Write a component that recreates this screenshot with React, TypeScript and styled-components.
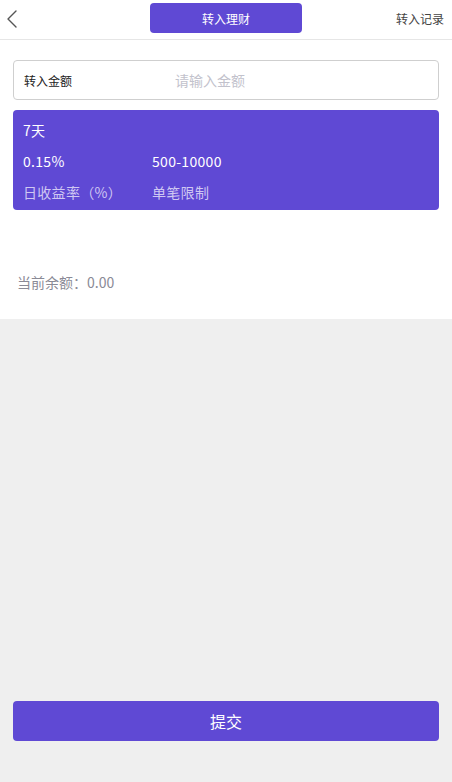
import React from "react";
import styled, { createGlobalStyle } from "styled-components";

const purple = "#5f49d4";

const GlobalStyle = createGlobalStyle`
  html, body {
    margin: 0;
    padding: 0;
    height: 100%;
  }
  body {
    font-family: "Noto Sans CJK SC", "Noto Sans", sans-serif;
    background: #efefef;
  }
  #root {
    min-height: 100%;
  }
  * {
    box-sizing: border-box;
  }
`;

const Page = styled.div`
  display: flex;
  flex-direction: column;
  min-height: 100vh;
`;

const Header = styled.div`
  display: flex;
  align-items: center;
  justify-content: space-between;
  height: 40px;
  padding: 0 8px 0 6px;
  background: #fff;
  border-bottom: 1px solid #e6e6e6;
  position: relative;
`;

const BackButton = styled.button`
  border: none;
  background: none;
  padding: 0;
  width: 20px;
  height: 24px;
  display: flex;
  align-items: center;
  cursor: pointer;
  margin-top: -2px;
`;

const Tab = styled.div`
  position: absolute;
  left: 150px;
  top: 3px;
  width: 152px;
  height: 30px;
  display: flex;
  align-items: center;
  justify-content: center;
  background: ${purple};
  border-radius: 4px;
  color: #fff;
  font-size: 12px;
`;

const Record = styled.span`
  font-size: 12px;
  color: #444;
  margin-top: -2px;
`;

const Body = styled.div`
  background: #fff;
  padding: 20px 13px 0;
  height: 279px;
`;

const InputBox = styled.label`
  display: flex;
  align-items: center;
  height: 40px;
  border: 1px solid #cfcfcf;
  border-radius: 4px;
  padding: 0 10px;
`;

const InputLabel = styled.span`
  width: 151px;
  font-size: 12px;
  color: #222;
`;

const Input = styled.input`
  flex: 1;
  border: none;
  outline: none;
  font-family: inherit;
  font-size: 14px;
  color: #333;
  padding: 0;
  background: transparent;
  &::placeholder {
    color: #c2c2cc;
  }
`;

const Card = styled.div`
  margin-top: 10px;
  height: 100px;
  padding: 4px 10px 0;
  background: ${purple};
  border-radius: 4px;
`;

const CardRow = styled.div<{ $muted?: boolean }>`
  display: flex;
  height: 31px;
  align-items: center;
  font-size: 14px;
  letter-spacing: 0.3px;
  color: ${(p) => (p.$muted ? "#cfc7f2" : "#fff")};
`;

const Cell = styled.span`
  width: 129px;
`;

const Balance = styled.div`
  margin-top: 62px;
  padding-left: 4px;
  font-size: 14px;
  color: #8a8a96;
`;

const Footer = styled.div`
  flex: 1;
  display: flex;
  flex-direction: column;
  justify-content: flex-end;
  padding: 0 13px 41px;
`;

const Submit = styled.button`
  width: 100%;
  height: 40px;
  border: none;
  border-radius: 4px;
  background: ${purple};
  color: #fff;
  font-family: inherit;
  font-size: 16px;
  cursor: pointer;
`;

export default function App() {
  return (
    <Page>
      <GlobalStyle />
      <Header>
        <BackButton aria-label="返回">
          <svg width="12" height="20" viewBox="0 0 12 20">
            <polyline
              points="10,2 2,10 10,18"
              fill="none"
              stroke="#555"
              strokeWidth="1.4"
              strokeLinecap="round"
              strokeLinejoin="round"
            />
          </svg>
        </BackButton>
        <Tab>转入理财</Tab>
        <Record>转入记录</Record>
      </Header>
      <Body>
        <InputBox>
          <InputLabel>转入金额</InputLabel>
          <Input placeholder="请输入金额" />
        </InputBox>
        <Card>
          <CardRow>
            <Cell>7天</Cell>
          </CardRow>
          <CardRow>
            <Cell>0.15%</Cell>
            <span>500-10000</span>
          </CardRow>
          <CardRow $muted>
            <Cell>日收益率（%）</Cell>
            <span>单笔限制</span>
          </CardRow>
        </Card>
        <Balance>当前余额：0.00</Balance>
      </Body>
      <Footer>
        <Submit>提交</Submit>
      </Footer>
    </Page>
  );
}
